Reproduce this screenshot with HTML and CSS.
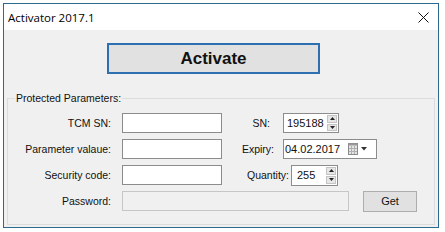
FILE: index.html
```html
<!DOCTYPE html>
<html>
<head>
<meta charset="utf-8">
<link rel="stylesheet" href="styles.css">
</head>
<body>
<div class="window">
  <div class="titlebar">
    <span class="title">Activator 2017.1</span>
    <svg class="close" width="11" height="11" viewBox="0 0 11 11"><path d="M0.5 0.5L10.5 10.5M10.5 0.5L0.5 10.5" stroke="#111" stroke-width="1" fill="none"/></svg>
  </div>
  <div class="client">
    <button class="activate">Activate</button>
    <fieldset class="group">
      <legend class="legend">Protected Parameters:</legend>
      <div class="row">
        <span class="lbl">TCM SN:</span>
        <span class="textbox"></span>
        <span class="rlbl rlbl-sn">SN:</span>
        <span class="numeric num-sn">
          <span class="val">195188</span>
          <span class="spin">
            <span class="spin-btn"><svg width="5" height="3" viewBox="0 0 5 3"><path d="M0 3H5L2.5 0Z" fill="#222"/></svg></span>
            <span class="spin-btn"><svg width="5" height="3" viewBox="0 0 5 3"><path d="M0 0H5L2.5 3Z" fill="#222"/></svg></span>
          </span>
        </span>
      </div>
      <div class="row">
        <span class="lbl">Parameter valaue:</span>
        <span class="textbox"></span>
        <span class="rlbl rlbl-exp">Expiry:</span>
        <span class="datepick">
          <span class="val val-date">04.02.2017</span>
          <svg class="cal" width="10" height="12" viewBox="0 0 10 12"><rect x="0.5" y="0.5" width="9" height="11" fill="#e4e4e4" stroke="#8a8a8a"/><rect x="0.5" y="0.5" width="9" height="2" fill="#9a9a9a"/><path d="M3.5 3v8M6.5 3v8M1 5.5h8M1 8.5h8" stroke="#b0b0b0" stroke-width="1"/></svg>
          <svg class="drop" width="6" height="4" viewBox="0 0 6 4"><path d="M0 0H6L3 3.5Z" fill="#333"/></svg>
        </span>
      </div>
      <div class="row">
        <span class="lbl">Security code:</span>
        <span class="textbox"></span>
        <span class="rlbl rlbl-qty">Quantity:</span>
        <span class="numeric num-qty">
          <span class="val val-qty">255</span>
          <span class="spin">
            <span class="spin-btn"><svg width="5" height="3" viewBox="0 0 5 3"><path d="M0 3H5L2.5 0Z" fill="#222"/></svg></span>
            <span class="spin-btn"><svg width="5" height="3" viewBox="0 0 5 3"><path d="M0 0H5L2.5 3Z" fill="#222"/></svg></span>
          </span>
        </span>
      </div>
      <div class="row">
        <span class="lbl">Password:</span>
        <span class="textbox textbox-wide"></span>
        <button class="get">Get</button>
      </div>
    </fieldset>
  </div>
</div>
</body>
</html>
```
FILE: styles.css
```css
body {
  margin: 0;
  background: #ffffff;
  font-family: "Liberation Sans", Arial, sans-serif;
  color: #111;
}

.window {
  margin: 3px 0 0 3px;
  width: 436px;
  box-sizing: border-box;
  border: 1px solid #2b6a8d;
  background: #f0f0f0;
}

.titlebar {
  height: 26px;
  background: #ffffff;
  display: flex;
  align-items: center;
  justify-content: space-between;
  padding: 0 9px 0 4px;
}

.title {
  font-family: "Open Sans", "Noto Sans", sans-serif;
  font-size: 11.5px;
  color: #000;
}

.close {
  display: block;
}

.client {
  padding: 13px 0 2px 3px;
}

.activate {
  display: block;
  margin: 0 0 0 100px;
  width: 213px;
  height: 31px;
  box-sizing: border-box;
  border: 2px solid #2e6fb0;
  background: #e1e1e1;
  padding: 0;
  font-family: "Liberation Sans", Arial, sans-serif;
  font-weight: bold;
  font-size: 17px;
  color: #111;
}

.group {
  margin: 18px 0 0 0;
  width: 428px;
  box-sizing: border-box;
  border: 1px solid #dcdcdc;
  padding: 8px 0 13px 0;
  min-width: 0;
}

.legend {
  margin-left: 7px;
  padding: 0 1px;
  font-size: 10.5px;
  line-height: 13px;
}

.row {
  display: flex;
  align-items: center;
  height: 20px;
  font-size: 10.5px;
}

.row + .row {
  margin-top: 6px;
}

.lbl {
  flex: none;
  width: 103px;
  margin-right: 11px;
  text-align: right;
}

.textbox {
  flex: none;
  width: 100px;
  height: 20px;
  box-sizing: border-box;
  border: 1px solid #8c8c8c;
  background: #ffffff;
}

.textbox-wide {
  width: 227px;
  border-color: #c6c6c6;
  background: #f0f0f0;
}

.rlbl {
  flex: none;
  text-align: right;
}

.rlbl-sn {
  width: 48px;
  margin-right: 13px;
}

.rlbl-exp {
  width: 52px;
  margin-right: 9px;
}

.rlbl-qty {
  width: 67px;
  margin-right: 2px;
}

.numeric,
.datepick {
  flex: none;
  display: flex;
  align-items: center;
  box-sizing: border-box;
  border: 1px solid #8c8c8c;
  background: #ffffff;
  font-size: 11px;
}

.num-sn {
  width: 56px;
  height: 20px;
}

.num-qty {
  width: 47px;
  height: 21px;
}

.val {
  padding-left: 3px;
}

.val-qty {
  padding-left: 5px;
}

.val-date {
  padding-left: 1px;
}

.spin {
  margin-left: auto;
  width: 10px;
  align-self: stretch;
  display: flex;
  flex-direction: column;
  gap: 1px;
  padding: 1px 1px 1px 0;
}

.spin-btn {
  flex: 1;
  display: flex;
  align-items: center;
  justify-content: center;
  background: #e6e6e6;
  border: 1px solid #c4c4c4;
}

.spin-btn svg {
  display: block;
}

.datepick {
  width: 94px;
  height: 20px;
}

.cal {
  display: block;
  margin-left: auto;
}

.drop {
  display: block;
  margin: 0 9px 0 3px;
}

.get {
  flex: none;
  margin-left: 14px;
  width: 54px;
  height: 21px;
  box-sizing: border-box;
  border: 1px solid #adadad;
  background: #e1e1e1;
  padding: 0;
  font-family: "Liberation Sans", Arial, sans-serif;
  font-size: 11px;
  color: #111;
}
```
